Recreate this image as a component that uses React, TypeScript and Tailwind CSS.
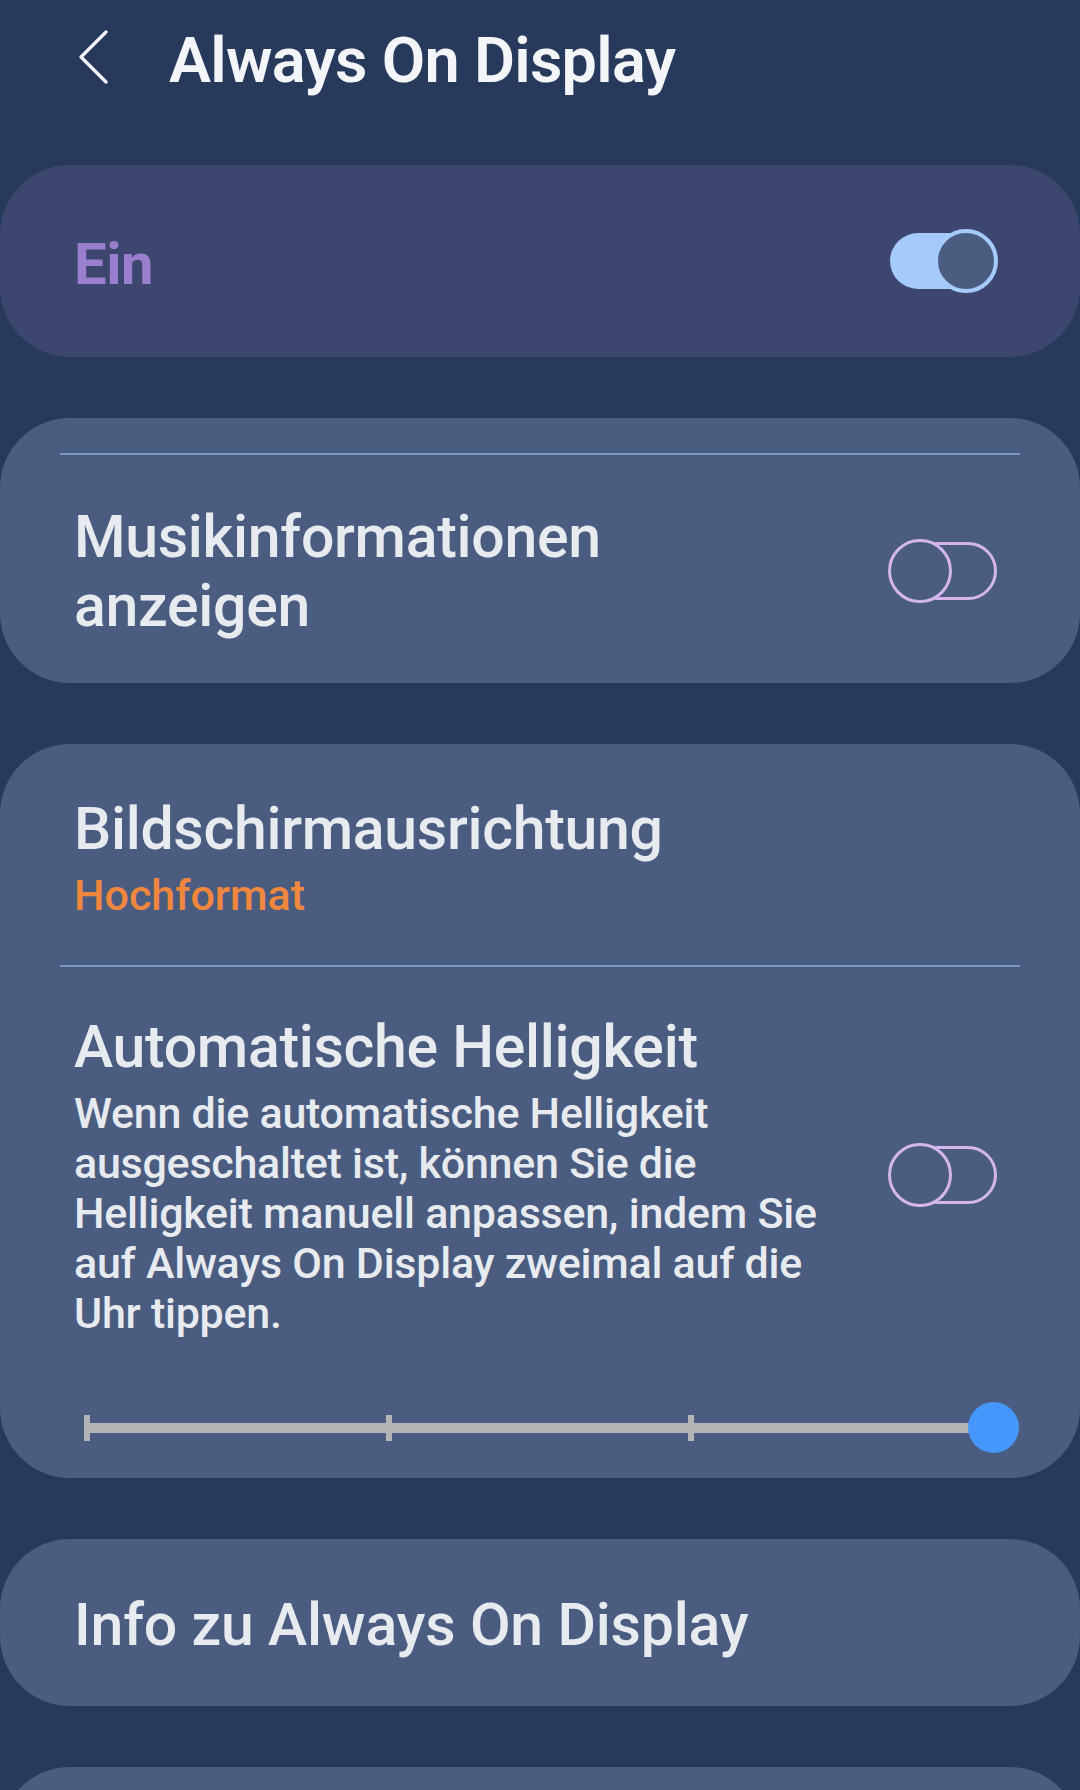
import React from "react";

function ToggleOn() {
  return (
    <div className="relative w-[110px] h-[66px] shrink-0">
      <div className="absolute left-[2px] top-[5px] w-[100px] h-[56px] rounded-full bg-[#a5cbfc]" />
      <div className="absolute right-0 top-[1px] w-[64px] h-[64px] rounded-full bg-[#4a5d81] border-[4px] border-[#a5cbfc]" />
    </div>
  );
}

function ToggleOff() {
  return (
    <div className="relative w-[110px] h-[66px] shrink-0">
      <div className="absolute left-[20px] right-[1px] top-[4px] h-[58px] rounded-full border-[3px] border-[#d4b6ec]" />
      <div className="absolute left-0 top-[1px] w-[64px] h-[64px] rounded-full bg-[#4a5d80] border-[3px] border-[#d4b6ec]" />
    </div>
  );
}

function Slider() {
  const ticks = [0, 302, 604];
  return (
    <div className="relative ml-[84px] w-[935px] h-[52px] mt-[64px]">
      <div className="absolute left-0 top-[21px] w-[909px] h-[10px] bg-[#b4b5b7]" />
      {ticks.map((t) => (
        <div
          key={t}
          className="absolute top-[13px] w-[6px] h-[26px] bg-[#b4b5b7]"
          style={{ left: t }}
        />
      ))}
      <div className="absolute left-[884px] top-0 w-[51px] h-[51px] rounded-full bg-[#4597fb]" />
    </div>
  );
}

export default function App() {
  return (
    <div className="w-[1080px] h-[1790px] overflow-hidden bg-[#283a5b] font-['Roboto',sans-serif] text-[#e7eaef]">
      <header className="flex items-start pl-[78px] pt-[22px] h-[165px]">
        <svg className="mt-[8px] w-[30px] h-[54px] shrink-0" viewBox="0 0 30 54">
          <path
            d="M28 2 L3 27 L28 52"
            stroke="#f4f5f8"
            strokeWidth="3.2"
            fill="none"
            strokeLinecap="round"
            strokeLinejoin="round"
          />
        </svg>
        <h1 className="ml-[61px] text-[63px] leading-[77px] font-semibold text-[#f4f5f8] tracking-[-0.7px]">
          Always On Display
        </h1>
      </header>

      <div className="flex flex-col gap-[61px]">
        <div className="h-[192px] rounded-[70px] bg-[#3d466f] flex items-center justify-between pl-[74px] pr-[82px]">
          <span className="mt-[6px] text-[58px] leading-[72px] font-bold text-[#9a7fcf] tracking-[-0.5px]">Ein</span>
          <ToggleOn />
        </div>

        <div className="h-[265px] rounded-[70px] bg-[#4a5d80] pt-[35px]">
          <div className="mx-[60px] h-[2px] bg-[#7b98c2]" />
          <div className="mt-[47px] flex items-center justify-between pl-[74px] pr-[82px]">
            <div className="text-[59px] leading-[69px] font-medium tracking-[-0.3px]">
              Musikinformationen
              <br />
              anzeigen
            </div>
            <ToggleOff />
          </div>
        </div>

        <div className="h-[734px] rounded-[70px] bg-[#4a5d80] pt-[50px]">
          <div className="pl-[74px]">
            <div className="text-[59px] leading-[69px] font-medium tracking-[-0.3px]">Bildschirmausrichtung</div>
            <div className="mt-[6px] text-[43px] leading-[52px] font-medium tracking-[0px] text-[#f0873f]">Hochformat</div>
          </div>
          <div className="mt-[44px] mx-[60px] h-[2px] bg-[#7b98c2]" />
          <div className="mt-[45px] flex items-center justify-between pl-[74px] pr-[82px]">
            <div>
              <div className="text-[59px] leading-[69px] font-medium tracking-[-0.3px]">Automatische Helligkeit</div>
              <div className="mt-[7px] text-[43px] leading-[50px] font-medium tracking-[-0.25px]">
                Wenn die automatische Helligkeit
                <br />
                ausgeschaltet ist, können Sie die
                <br />
                Helligkeit manuell anpassen, indem Sie
                <br />
                auf Always On Display zweimal auf die
                <br />
                Uhr tippen.
              </div>
            </div>
            <ToggleOff />
          </div>
          <Slider />
        </div>

        <div className="h-[167px] rounded-[70px] bg-[#4a5d80] flex items-center pl-[74px]">
          <span className="mt-[4px] text-[59px] leading-[69px] font-medium tracking-[-0.2px]">Info zu Always On Display</span>
        </div>

        <div className="h-[200px] rounded-[70px] bg-[#4a5d80]" />
      </div>
    </div>
  );
}
